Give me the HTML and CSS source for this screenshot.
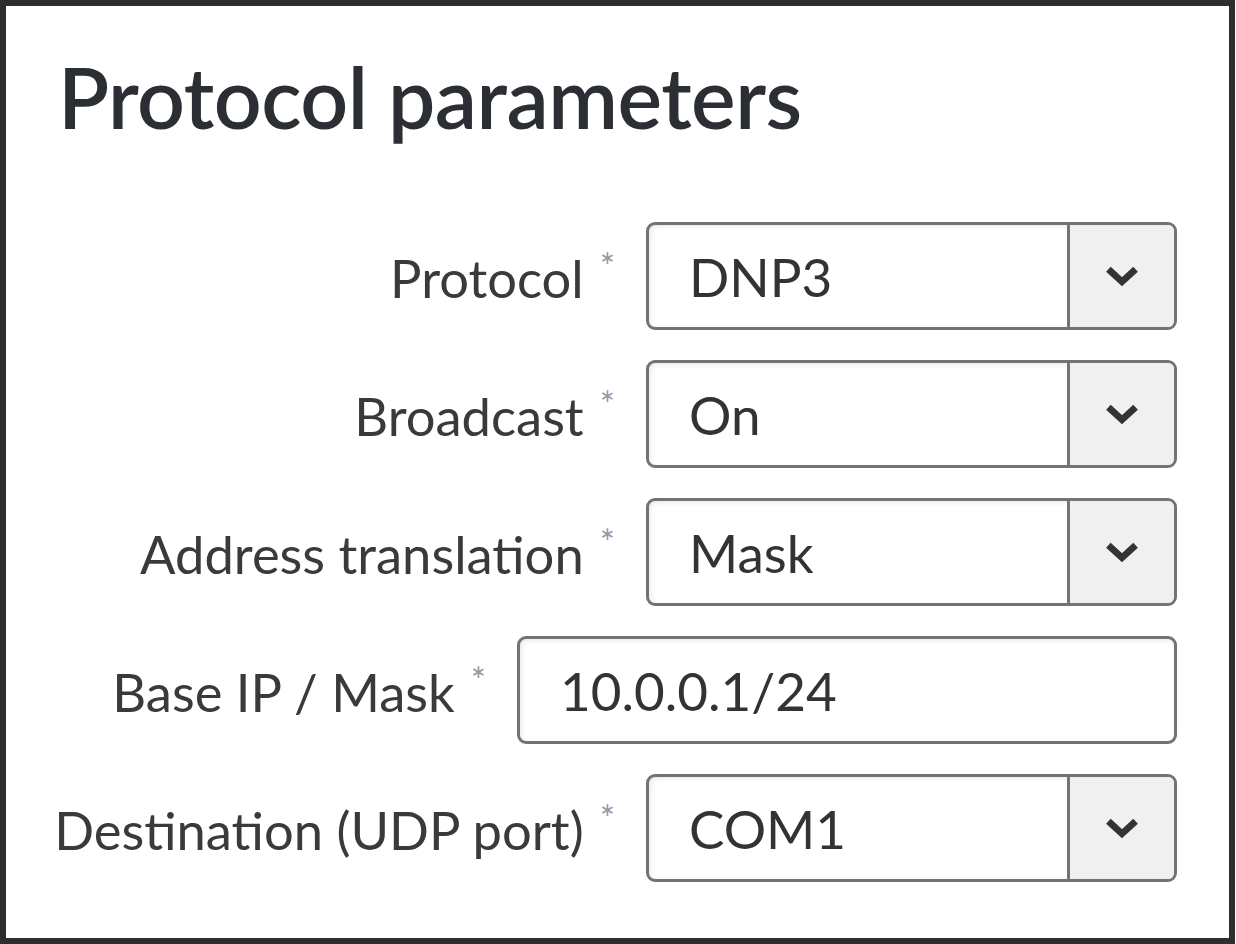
FILE: index.html
```html
<!DOCTYPE html>
<html lang="en">
<head>
    <meta charset="utf-8">
    <title>Protocol parameters</title>
    <link rel="stylesheet" href="styles.css">
</head>
<body>
<div class="panel">
    <h1>Protocol parameters</h1>
    <form class="params">
        <div class="row">
            <label>Protocol<abbr title="required">*</abbr></label>
            <div class="select">
                <span class="value">DNP3</span>
                <span class="caret"><svg viewBox="0 0 36 22"><path d="M5 4 L18 16 L31 4"/></svg></span>
            </div>
        </div>
        <div class="row">
            <label>Broadcast<abbr title="required">*</abbr></label>
            <div class="select">
                <span class="value">On</span>
                <span class="caret"><svg viewBox="0 0 36 22"><path d="M5 4 L18 16 L31 4"/></svg></span>
            </div>
        </div>
        <div class="row">
            <label>Address translation<abbr title="required">*</abbr></label>
            <div class="select">
                <span class="value">Mask</span>
                <span class="caret"><svg viewBox="0 0 36 22"><path d="M5 4 L18 16 L31 4"/></svg></span>
            </div>
        </div>
        <div class="row">
            <label>Base IP / Mask<abbr title="required">*</abbr></label>
            <div class="text">
                <span class="value">10.0.0.1/24</span>
            </div>
        </div>
        <div class="row">
            <label>Destination (UDP port)<abbr title="required">*</abbr></label>
            <div class="select">
                <span class="value">COM1</span>
                <span class="caret"><svg viewBox="0 0 36 22"><path d="M5 4 L18 16 L31 4"/></svg></span>
            </div>
        </div>
    </form>
</div>
</body>
</html>
```

FILE: styles.css
```css
body {
    margin: 0;
    background: #fff;
    font-family: Lato, "Open Sans", sans-serif;
    color: #333;
}
.panel {
    box-sizing: border-box;
    width: 1235px;
    height: 944px;
    border: 6px solid #2e2e2e;
    padding: 0 52px;
}
h1 {
    margin: 0;
    padding-top: 41px;
    font-size: 84px;
    font-weight: 600;
    line-height: 100px;
    color: #2b2f33;
    letter-spacing: -0.5px;
}
.params {
    display: flex;
    flex-direction: column;
    gap: 30px;
    margin-top: 75px;
}
.row {
    display: flex;
    justify-content: flex-end;
    align-items: center;
    gap: 31px;
}
label {
    font-size: 52.5px;
    color: #3a3a3a;
    white-space: nowrap;
}
abbr[title="required"] {
    display: inline-block;
    margin-left: 16px;
    text-decoration: none;
    color: #9a96a4;
    font-size: 36px;
    vertical-align: 18px;
}
.select, .text {
    box-sizing: border-box;
    flex-shrink: 0;
    height: 108px;
    display: flex;
    border: 3px solid #737373;
    border-radius: 9px;
    background: #fff;
    box-shadow: inset 2px 2px 5px rgba(0, 0, 0, 0.08);
    overflow: hidden;
}
.select {
    width: 531px;
}
.text {
    width: 660px;
}
.value {
    flex: 1;
    display: flex;
    align-items: center;
    padding-left: 40px;
    font-size: 53px;
    color: #333;
}
.caret {
    box-sizing: border-box;
    width: 107px;
    display: flex;
    align-items: center;
    justify-content: center;
    background: #f0f0f0;
    border-left: 3px solid #737373;
}
.caret svg {
    width: 38px;
    height: 23px;
    fill: none;
    stroke: #333;
    stroke-width: 6.5;
}
```
